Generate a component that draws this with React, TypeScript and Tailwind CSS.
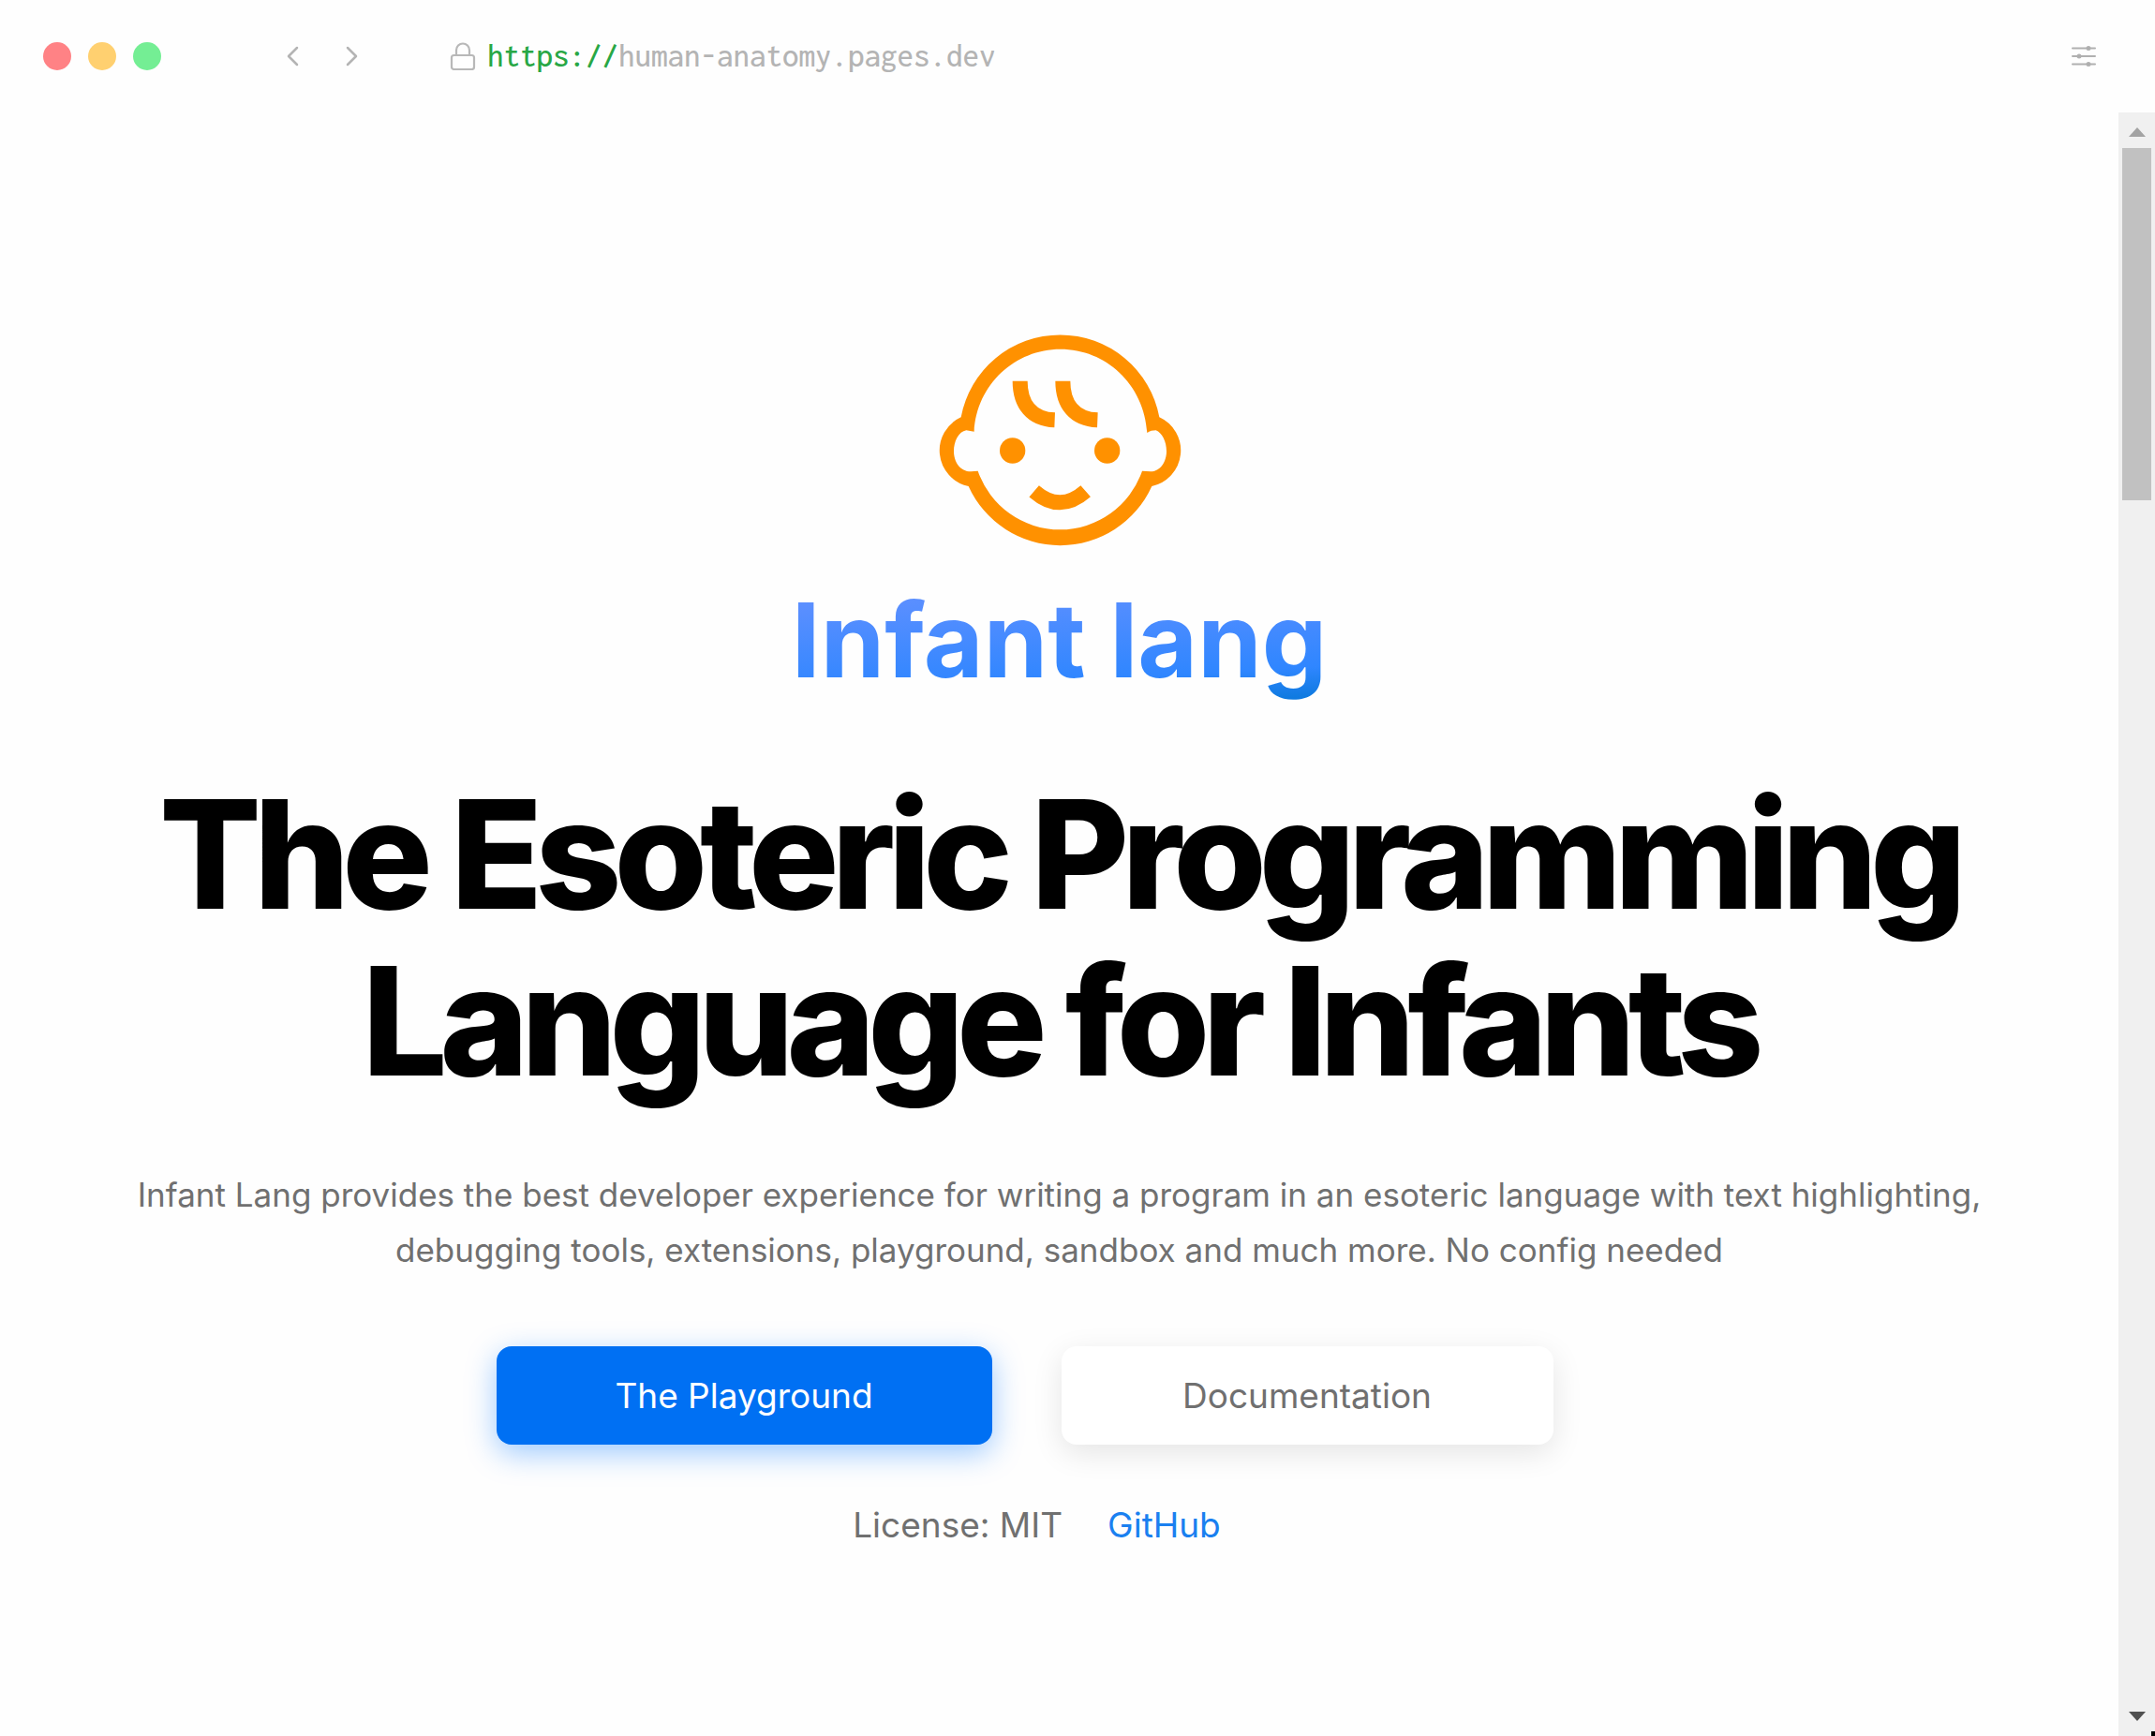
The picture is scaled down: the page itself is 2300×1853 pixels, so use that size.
import React from "react";

function BabyLogo() {
  return (
    <svg viewBox="64 45 780 684" className="h-[228px] w-[260px]" role="img" aria-label="Infant lang logo">
      <g fill="#ff9100">
        <path
          fillRule="evenodd"
          d="M138 316A323 323 0 0 1 773 316A117 117 0 0 1 749 537A322 322 0 0 1 162 537A117 117 0 0 1 138 316ZM180 362C188 210 312 98 456 98C602 98 724 210 734 366C742 360 752 358 762 358C782 366 796 394 796 425C796 458 776 490 745 490L718 488A278 278 0 0 1 192 488L170 490C135 490 115 458 115 425C115 394 130 362 155 358Z"
        />
        <circle cx="303" cy="423" r="41" />
        <circle cx="606" cy="423" r="41" />
      </g>
      <g fill="none" stroke="#ff9100" strokeWidth="48">
        <path d="M327 200C327 275 365 322 438 325" />
        <path d="M464 200C464 275 502 322 575 325" />
        <path d="M372 553Q455 625 537 553" />
      </g>
    </svg>
  );
}

function Chevron({ d }: { d: string }) {
  return (
    <svg viewBox="0 0 14 22" className="h-[22px] w-[14px]" fill="none" stroke="#b4b4b4" strokeWidth="2.5" strokeLinecap="round" strokeLinejoin="round">
      <path d={d} />
    </svg>
  );
}

function TitleBar() {
  return (
    <header className="flex h-[120px] items-center pr-[63px] pl-[46px]">
      <div className="flex gap-[18px]">
        <button aria-label="Close" className="size-[30px] rounded-full bg-[#ff8285]" />
        <button aria-label="Minimize" className="size-[30px] rounded-full bg-[#ffd070]" />
        <button aria-label="Maximize" className="size-[30px] rounded-full bg-[#74ee94]" />
      </div>
      <nav className="ml-[133px] flex gap-[50px]">
        <button aria-label="Back">
          <Chevron d="M12 2L3 11L12 20" />
        </button>
        <button aria-label="Forward">
          <Chevron d="M2 2L11 11L2 20" />
        </button>
      </nav>
      <div className="ml-[97px] flex items-center gap-3">
        <svg viewBox="0 0 28 30" className="h-[30px] w-7" fill="none" stroke="#b8b8b8" strokeWidth="2.2">
          <rect x="2" y="14" width="24" height="15" rx="2.5" />
          <path d="M7 14V8.500A7 7 0 0 1 21 8.500V14" />
        </svg>
        <p className="font-['Inconsolata','DejaVu_Sans_Mono',monospace] text-[35px] leading-9 font-medium text-[#b4b4b4]">
          <span className="text-[#28a745]">https://</span>human-anatomy.pages.dev
        </p>
      </div>
      <button aria-label="Settings" className="ml-auto">
        <svg viewBox="0 0 26 22" className="h-[22px] w-[26px]" fill="#a8a8a8" stroke="#b0b0b0" strokeWidth="2" strokeLinecap="round">
          <path d="M1 2.500H25M1 11H25M1 19.500H25" />
          <circle cx="18" cy="2.500" r="1.500" />
          <circle cx="8" cy="11" r="1.500" />
          <circle cx="18" cy="19.500" r="1.500" />
        </svg>
      </button>
    </header>
  );
}

function Scrollbar() {
  return (
    <aside className="relative flex w-[39px] shrink-0 flex-col items-center bg-[#f0f0f0]" aria-label="Scrollbar">
      <button aria-label="Scroll up" className="flex h-[38px] w-full items-center justify-center pt-1">
        <svg viewBox="0 0 18 10" className="h-[10px] w-[18px]" fill="#a3a3a3">
          <path d="M0 10L9 0L18 10Z" />
        </svg>
      </button>
      <div className="h-[376px] w-[31px] bg-[#c1c1c1]" />
      <button aria-label="Scroll down" className="mt-auto flex h-[42px] w-full items-center justify-center">
        <svg viewBox="0 0 18 10" className="h-[10px] w-[18px]" fill="#505050">
          <path d="M0 0L9 10L18 0Z" />
        </svg>
      </button>
      <span className="absolute right-0 bottom-0 h-[5px] w-1 bg-black" />
    </aside>
  );
}

export default function App() {
  return (
    <div className="flex min-h-screen flex-col bg-[#fefefe] font-['Inter',sans-serif]">
      <TitleBar />
      <div className="flex flex-1">
        <main className="flex flex-1 flex-col items-center px-[120px] pt-[235px] text-center">
          <BabyLogo />
          <h2 className="mt-8 bg-[linear-gradient(177deg,#6090ff_12%,#2f86ff_76%,#0f7ae0_95%)] bg-clip-text text-[110px] leading-[136px] font-bold text-transparent">
            Infant lang
          </h2>
          <h1 className="mt-[72px] text-[161px] leading-[178px] font-extrabold tracking-tighter text-black">
            The Esoteric Programming
            <br />
            Language for Infants
          </h1>
          <p className="mt-[67px] text-[35px] leading-[59px] text-[#707070]">
            Infant Lang provides the best developer experience for writing a program in an esoteric language with text highlighting,
            <br />
            debugging tools, extensions, playground, sandbox and much more. No config needed
          </p>
          <div className="mt-[73px] flex">
            <a
              href="#playground"
              className="mr-[74px] flex h-[105px] w-[529px] items-center justify-center rounded-2xl bg-[#0070f3] text-[37px] text-white shadow-[0_9px_32px_rgba(0,118,255,0.39)]"
            >
              The Playground
            </a>
            <a
              href="#documentation"
              className="mr-[74px] flex h-[105px] w-[525px] items-center justify-center rounded-2xl bg-white text-[37px] text-[#707070] shadow-[0_9px_32px_rgba(0,0,0,0.1)]"
            >
              Documentation
            </a>
          </div>
          <div className="mt-14 flex text-[37px] leading-[59px] text-[#707070]">
            <span className="mr-12">License: MIT</span>
            <a href="#github" className="mr-12 text-[#1a80f0]">
              GitHub
            </a>
          </div>
        </main>
        <Scrollbar />
      </div>
    </div>
  );
}
